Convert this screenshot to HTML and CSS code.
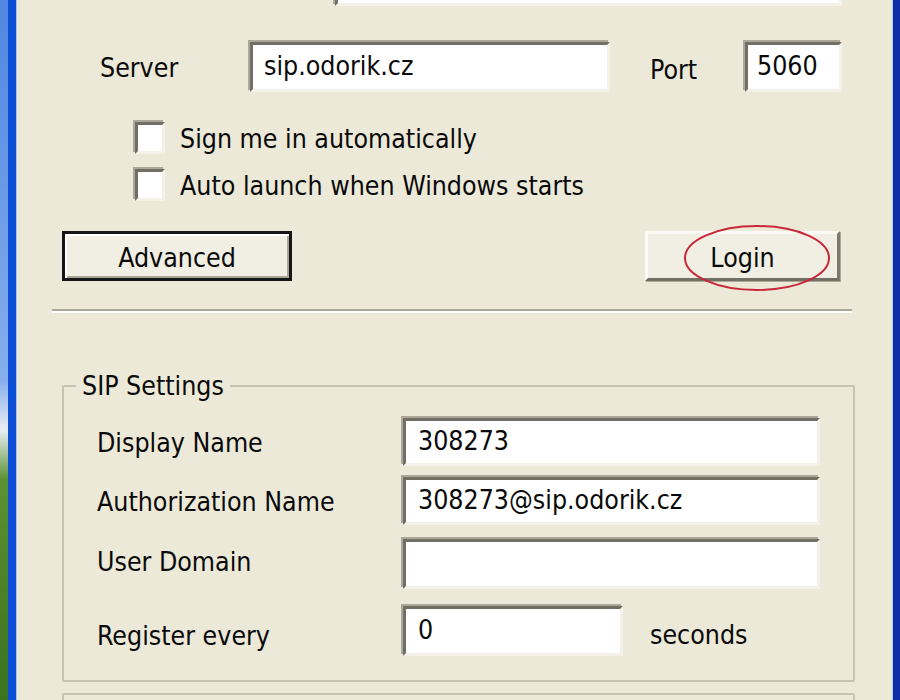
FILE: index.html
```html
<!DOCTYPE html>
<html lang="en">
<head>
  <meta charset="UTF-8" />
  <title>Sign In</title>
  <link rel="stylesheet" href="styles.css">
</head>
<body>
  <div class="desktop"></div>

  <div class="window">
    <div class="row top-row">
      <input type="password" class="field top-field" value="">
    </div>

    <div class="row server-row">
      <label class="server-label">Server</label>
      <input type="text" class="field server-field" value="sip.odorik.cz">
      <label class="port-label">Port</label>
      <input type="text" class="field port-field" value="5060">
    </div>

    <label class="check-row first-check">
      <span class="checkbox"></span>
      <span>Sign me in automatically</span>
    </label>
    <label class="check-row">
      <span class="checkbox"></span>
      <span>Auto launch when Windows starts</span>
    </label>

    <div class="row button-row">
      <button class="btn btn-default">Advanced</button>
      <div class="login-wrap">
        <button class="btn">Login</button>
        <!-- red marker drawn round the login button -->
        <svg class="marker" width="150" height="70" viewBox="0 0 150 70">
          <ellipse cx="75" cy="35" rx="72" ry="32" fill="none" stroke="#c8283a" stroke-width="2"/>
        </svg>
      </div>
    </div>

    <div class="separator"></div>

    <fieldset class="group">
      <legend>SIP Settings</legend>
      <div class="sip-row row-1">
        <span class="sip-label">Display Name</span>
        <input type="text" class="field sip-field" value="308273">
      </div>
      <div class="sip-row row-2">
        <span class="sip-label">Authorization Name</span>
        <input type="text" class="field sip-field" value="308273@sip.odorik.cz">
      </div>
      <div class="sip-row row-3">
        <span class="sip-label">User Domain</span>
        <input type="text" class="field sip-field" value="">
      </div>
      <div class="sip-row row-4">
        <span class="sip-label">Register every</span>
        <input type="text" class="field register-field" value="0">
        <span class="seconds">seconds</span>
      </div>
    </fieldset>

    <fieldset class="group next-group"></fieldset>
  </div>
</body>
</html>
```

FILE: styles.css
```css
body {
  margin: 0;
  height: 700px;
  display: flex;
  overflow: hidden;
  font-family: "DejaVu Sans", sans-serif;
  font-stretch: condensed;
  font-size: 26.5px;
  color: #0a0a0a;
}

.desktop {
  width: 8px;
  background: linear-gradient(#4f86e0 0, #86aeec 380px, #e9eef5 430px, #5a9132 480px, #3a721e 700px);
}

.window {
  flex: 1;
  height: 700px;
  overflow: hidden;
  background: #ece9d8;
  border-left: 8px solid #0d4ed6;
  border-right: 7px solid #0f2da6;
  box-shadow: inset 1px 0 #a9c2f0, inset -1px 0 #b8c9ef;
}

.row { display: flex; align-items: center; }

/* sunken edit box */
.field {
  box-sizing: border-box;
  height: 50px;
  margin: 0;
  padding: 0 0 4px 11px;
  background: #fff;
  border: 3px solid;
  border-color: #716f64 #f4f2e8 #f4f2e8 #716f64;
  box-shadow: -2px -2px 0 #aca899;
  font: inherit;
  color: inherit;
  outline: none;
}

.top-row { margin: -44px 0 0 319px; }
.top-field { width: 507px; }

.server-row { margin: 36px 0 0 84px; }
.server-label { width: 150px; }
.server-field { width: 360px; }
.port-label { margin-left: 40px; width: 95px; padding-top: 4px; }
.port-field { width: 97px; padding-left: 9px; }

.check-row {
  display: flex;
  align-items: center;
  gap: 15px;
  margin: 15px 0 0 119px;
  height: 32px;
}
.first-check { margin-top: 30px; }
.checkbox {
  box-sizing: border-box;
  width: 30px;
  height: 32px;
  background: #fff;
  border: 3px solid;
  border-color: #716f64 #f4f2e8 #f4f2e8 #716f64;
  box-shadow: -2px -2px 0 #aca899;
}

.button-row {
  justify-content: space-between;
  margin: 30px 53px 0 46px;
}

.btn {
  box-sizing: border-box;
  height: 50px;
  padding: 3px 0 0;
  font: inherit;
  color: inherit;
  background: #f1efe4;
  border: 3px solid;
  border-color: #fbfaf4 #7d7a6c #716f64 #fbfaf4;
  box-shadow: 1px 1px 0 #aca899;
}
.btn-default {
  width: 230px;
  border: 3px solid #161616;
  box-shadow: inset 2px 2px 0 #fff, inset -2px -2px 0 #a9a696;
}

.login-wrap { position: relative; }
.login-wrap .btn { width: 195px; }
.marker {
  position: absolute;
  left: 37px;
  top: -8px;
  pointer-events: none;
}

.separator {
  margin: 28px 41px 0 36px;
  height: 2px;
  background: #aca899;
  border-bottom: 2px solid #fff;
}

.group {
  margin: 58px 38px 0 46px;
  padding: 17px 0 24px 33px;
  border: 2px solid #c6c3b3;
  border-radius: 2px;
}
.group legend {
  margin-left: -21px;
  padding: 0 6px;
  line-height: 30px;
}

.sip-row { display: flex; align-items: center; }
.row-2 { margin-top: 11px; }
.row-3 { margin-top: 14px; }
.row-4 { margin-top: 17px; }
.row-1 .field, .row-2 .field { height: 48px; }
.sip-label { width: 306px; }
.row-3 .sip-label { padding-bottom: 6px; }
.row-4 .sip-label { padding-top: 8px; }
.sip-field { width: 417px; padding-left: 12px; }
.register-field { width: 220px; padding-left: 12px; padding-bottom: 4px; }
.seconds { margin-left: 27px; padding-top: 6px; }

.next-group {
  margin-top: 11px;
  height: 60px;
  padding: 0;
}
```
